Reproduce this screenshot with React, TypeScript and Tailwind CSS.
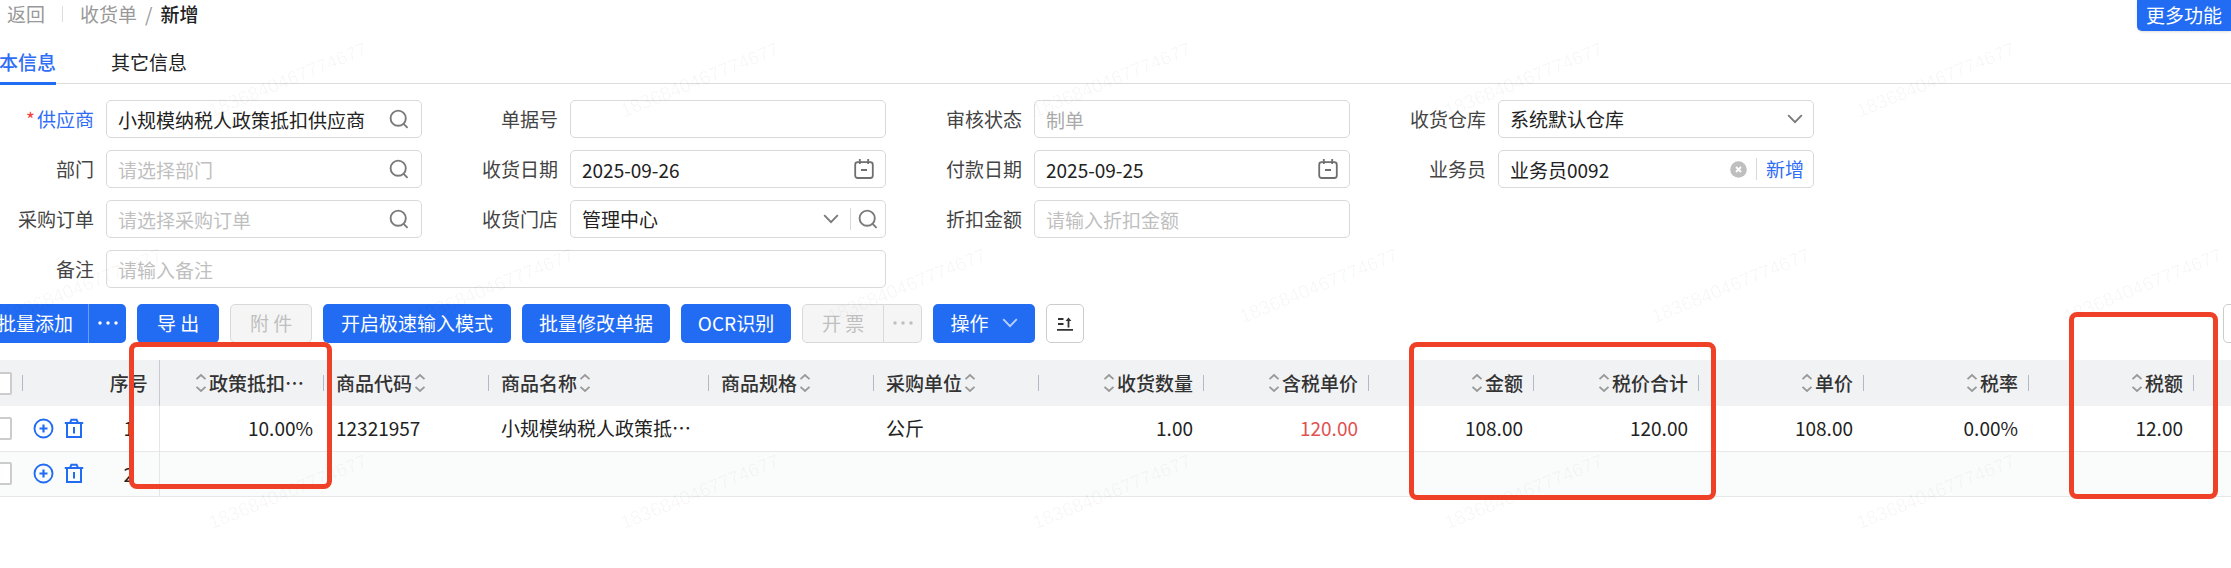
import type { ReactNode } from "react";

const BOX = "flex h-[38px] min-w-0 flex-1 items-center rounded-[5px] border border-[#d9d9d9] bg-white";
const INPUT = "h-full w-full min-w-0 flex-1 appearance-none bg-transparent pl-[11px] outline-none placeholder:text-[#bfbfbf]";
const BLUE = "flex h-[39px] shrink-0 items-center justify-center rounded-[5px] bg-[#226cf3] pb-[2px] whitespace-nowrap text-white";
const GREY = "flex h-[39px] shrink-0 items-center justify-center border border-[#d9d9d9] bg-[#f5f5f5] pb-[2px] whitespace-nowrap text-[#bfbfbf]";

function SearchIcon() {
  return (
    <svg width="20" height="20" viewBox="0 0 20 20" fill="none" stroke="#7a7a7a" strokeWidth="1.9" className="shrink-0">
      <circle cx="9.2" cy="9.2" r="7.6" />
      <path d="M14.6 14.8 18.6 18.8" />
    </svg>
  );
}

function CalendarIcon() {
  return (
    <svg width="20" height="20" viewBox="0 0 20 20" fill="none" stroke="#6f6f6f" strokeWidth="1.8" className="shrink-0">
      <rect x="1.2" y="3.2" width="17.6" height="15.8" rx="2.5" />
      <path d="M5.8 0v5M14.2 0v5M7 11h6" />
    </svg>
  );
}

function Chevron({ color = "#7a7a7a" }: { color?: string }) {
  return (
    <svg width="16" height="10" viewBox="0 0 16 10" fill="none" stroke={color} strokeWidth="1.9" className="shrink-0">
      <path d="M1.2 1.2 8 8.2 14.8 1.2" />
    </svg>
  );
}

function Dots() {
  return (
    <svg width="20" height="4" viewBox="0 0 20 4" fill="currentColor">
      <circle cx="2" cy="2" r="1.7" />
      <circle cx="10" cy="2" r="1.7" />
      <circle cx="18" cy="2" r="1.7" />
    </svg>
  );
}

function SortIcon() {
  return (
    <svg width="12" height="20" viewBox="0 0 12 20" fill="none" stroke="#999" strokeWidth="1.8" className="shrink-0">
      <path d="M1.5 6.2 6 2l4.5 4.2M1.5 13.8 6 18l4.5-4.2" />
    </svg>
  );
}

function Field({ id, label, required, wide, children }: {
  id: string; label: string; required?: boolean; wide?: boolean; children: ReactNode;
}) {
  return (
    <div className={wide ? "col-span-2 flex items-center gap-3 pr-[42px]" : "flex items-center gap-3 pr-[42px]"}>
      <label htmlFor={id} className={required ? "w-[94px] shrink-0 text-right whitespace-nowrap text-[#2f6df6]" : "w-[94px] shrink-0 text-right text-[#444]"}>
        {required && <span className="mr-[2px] text-[#f5403a]">*</span>}{label}
      </label>
      <div className={BOX}>{children}</div>
    </div>
  );
}

function SearchField({ id, label, value, placeholder, required }: {
  id: string; label: string; value?: string; placeholder?: string; required?: boolean;
}) {
  return (
    <Field id={id} label={label} required={required}>
      <input id={id} defaultValue={value} placeholder={placeholder} className={INPUT} />
      <button type="button" aria-label={`搜索${label}`} className="mr-3"><SearchIcon /></button>
    </Field>
  );
}

function DateField({ id, label, value }: { id: string; label: string; value: string }) {
  return (
    <Field id={id} label={label}>
      <input id={id} defaultValue={value} className={INPUT} />
      <button type="button" aria-label={`选择${label}`} className="mr-[11px]"><CalendarIcon /></button>
    </Field>
  );
}

type Column = { key: string; title: string; width: string; right?: boolean; red?: boolean; cut?: boolean };

const COLUMNS: Column[] = [
  { key: "deduct", title: "政策抵扣…", width: "w-[165px]", right: true, cut: true },
  { key: "code", title: "商品代码", width: "w-[165px]" },
  { key: "name", title: "商品名称", width: "w-[220px]" },
  { key: "spec", title: "商品规格", width: "w-[165px]" },
  { key: "unit", title: "采购单位", width: "w-[165px]" },
  { key: "qty", title: "收货数量", width: "w-[165px]", right: true },
  { key: "taxPrice", title: "含税单价", width: "w-[165px]", right: true, red: true },
  { key: "amount", title: "金额", width: "w-[165px]", right: true },
  { key: "total", title: "税价合计", width: "w-[165px]", right: true },
  { key: "price", title: "单价", width: "w-[165px]", right: true },
  { key: "rate", title: "税率", width: "w-[165px]", right: true },
  { key: "tax", title: "税额", width: "w-[165px]", right: true },
];

const ROWS: Record<string, string>[] = [
  {
    deduct: "10.00%", code: "12321957", name: "小规模纳税人政策抵…", unit: "公斤", qty: "1.00",
    taxPrice: "120.00", amount: "108.00", total: "120.00", price: "108.00", rate: "0.00%", tax: "12.00",
  },
  {},
];

function Check({ label }: { label: string }) {
  return (
    <input type="checkbox" aria-label={label}
      className="-ml-[11px] block size-[23px] appearance-none rounded-[2px] border-2 border-[#ccc] bg-white" />
  );
}

function RowActions() {
  return (
    <div className="flex items-center gap-[10px] pl-[10px]">
      <button type="button" aria-label="添加行">
        <svg width="21" height="21" viewBox="0 0 21 21" fill="none" stroke="#226cf3" strokeWidth="1.9">
          <circle cx="10.5" cy="10.5" r="9" />
          <path d="M10.5 6.5v8M6.5 10.5h8" strokeWidth="2.2" />
        </svg>
      </button>
      <button type="button" aria-label="删除行">
        <svg width="20" height="21" viewBox="0 0 20 21" fill="none" stroke="#226cf3" strokeWidth="2">
          <path d="M.8 5h18.4M6.2 4.4 7.4 1.8h5.2l1.2 2.6M3 5v14h14V5M10 9v6.5" />
        </svg>
      </button>
    </div>
  );
}

function ItemTable() {
  return (
    <table className="w-full table-fixed border-collapse">
      <colgroup>
        <col className="w-[23px]" />
        <col className="w-[76px]" />
        <col className="w-[60px]" />
        {COLUMNS.map((c) => <col key={c.key} className={c.width} />)}
        <col />
      </colgroup>
      <thead>
        <tr className="h-[46px] bg-[#f1f2f4] text-[#333]">
          <th className="p-0">
            <div className="flex items-center justify-between">
              <Check label="全选" />
              <span className="h-4 w-px bg-[#b4b8c5]" />
            </div>
          </th>
          <th className="p-0" />
          <th className="border-r border-[#c8cad2] p-0 text-center font-medium">序号</th>
          {COLUMNS.map((c) => (
            <th key={c.key} className="p-0 font-medium">
              <div className="flex items-center whitespace-nowrap">
                {c.right ? (
                  <div className={c.cut ? "flex flex-1 items-center justify-end gap-[2px] pr-[19px]" : "flex flex-1 items-center justify-end gap-[2px] pr-[10px]"}>
                    <SortIcon />{c.title}
                  </div>
                ) : (
                  <div className="flex flex-1 items-center gap-[2px] pl-3">{c.title}<SortIcon /></div>
                )}
                <span className="h-4 w-px bg-[#b4b8c5]" />
              </div>
            </th>
          ))}
          <th className="p-0" />
        </tr>
      </thead>
      <tbody>
        {ROWS.map((row, i) => (
          <tr key={i} className="h-[45px] border-b border-[#e6e9e8] text-[#222] even:bg-[#fafcfb]">
            <td className="p-0"><Check label={`选择第${i + 1}行`} /></td>
            <td className="p-0"><RowActions /></td>
            <td className="border-r border-[#e6e6e6] p-0 text-center">{i + 1}</td>
            {COLUMNS.map((c) => (
              <td key={c.key} className={c.right ? "truncate py-0 pr-[11px] text-right" : "truncate py-0 pl-3"}>
                <span className={c.red ? "text-[#e05252]" : ""}>{row[c.key]}</span>
              </td>
            ))}
            <td className="p-0" />
          </tr>
        ))}
      </tbody>
    </table>
  );
}

// staggered grid: every other line starts half a tile to the left
const MARKS = [0, 1, 2].flatMap((r) =>
  [0, 1, 2, 3, 4, 5].map((c) => ({ left: c * 412 + (r % 2 ? 9 : 214), top: r * 206 + 99 }))
);

function Watermark() {
  return (
    <div aria-hidden="true" className="pointer-events-none absolute inset-0 overflow-hidden select-none">
      {MARKS.map((m) => (
        <div key={`${m.left}-${m.top}`} className="absolute" style={{ left: m.left, top: m.top }}>
          <div className="absolute top-0 left-0 origin-bottom-left -rotate-22 font-['Liberation_Sans',sans-serif] text-[19px] leading-6 whitespace-nowrap text-black/4">
            1836840467774677
          </div>
          <div className="absolute -top-[60px] -left-[20px] origin-bottom-left -rotate-22 text-[46px] leading-[50px] whitespace-nowrap text-black/1">
            胡希凯-9428
          </div>
        </div>
      ))}
    </div>
  );
}

export default function App() {
  return (
    <div className="relative min-h-screen overflow-hidden bg-white font-['Noto_Sans_CJK_SC',sans-serif] text-[19px] leading-7 text-[#222]">
      <header className="flex h-[31px] items-start justify-between">
        <nav className="flex items-center pl-[7px] text-[#999]">
          <a href="#back">返回</a>
          <span className="mx-[17px] h-4 w-px bg-[#ddd]" />
          <a href="#receipts">收货单</a>
          <span className="mx-2">/</span>
          <span className="font-medium text-[#222]">新增</span>
        </nav>
        <button type="button" className="h-[31px] rounded-bl-[5px] bg-[#226cf3] px-[9px] pb-[2px] text-white shadow-sm">更多功能</button>
      </header>

      <div role="tablist" className="-ml-5 flex h-[53px] gap-[55px] border-b border-[#dcdcdc] pt-[17px]">
        <button type="button" role="tab" aria-selected="true" className="-mb-[2px] flex items-start border-b-3 border-[#226cf3] font-medium text-[#2f6df6]">基本信息</button>
        <button type="button" role="tab" aria-selected="false" className="flex items-start">其它信息</button>
      </div>

      <form className="grid grid-cols-[repeat(4,minmax(0,464px))] gap-y-3 pt-4">
        <SearchField id="supplier" label="供应商" value="小规模纳税人政策抵扣供应商" required />
        <Field id="billNo" label="单据号"><input id="billNo" className={INPUT} /></Field>
        <Field id="status" label="审核状态">
          <input id="status" defaultValue="制单" disabled className={`${INPUT} text-[#aaa]`} />
        </Field>
        <Field id="warehouse" label="收货仓库">
          <select id="warehouse" className={INPUT}><option>系统默认仓库</option></select>
          <span className="mr-[10px]"><Chevron /></span>
        </Field>

        <SearchField id="dept" label="部门" placeholder="请选择部门" />
        <DateField id="receiveDate" label="收货日期" value="2025-09-26" />
        <DateField id="payDate" label="付款日期" value="2025-09-25" />
        <Field id="clerk" label="业务员">
          <input id="clerk" defaultValue="业务员0092" className={INPUT} />
          <button type="button" aria-label="清除" className="mr-[9px]">
            <svg width="17" height="17" viewBox="0 0 17 17">
              <circle cx="8.5" cy="8.5" r="8.3" fill="#bfbfbf" />
              <path d="M6 6l5 5M11 6l-5 5" stroke="#fff" strokeWidth="1.8" />
            </svg>
          </button>
          <span className="h-[22px] w-px bg-[#d9d9d9]" />
          <button type="button" className="mx-[9px] shrink-0 text-[#2f6df6]">新增</button>
        </Field>

        <SearchField id="order" label="采购订单" placeholder="请选择采购订单" />
        <Field id="store" label="收货门店">
          <select id="store" className={INPUT}><option>管理中心</option></select>
          <span className="mr-[11px]"><Chevron /></span>
          <span className="h-[22px] w-px bg-[#d9d9d9]" />
          <button type="button" aria-label="搜索收货门店" className="mx-[7px]"><SearchIcon /></button>
        </Field>
        <Field id="discount" label="折扣金额"><input id="discount" placeholder="请输入折扣金额" className={INPUT} /></Field>
        <div />

        <Field id="remark" label="备注" wide><input id="remark" placeholder="请输入备注" className={INPUT} /></Field>
      </form>

      <div className="-ml-[18px] flex gap-[11px] pt-4 pb-[17px]">
        <div className="flex">
          <button type="button" className={`${BLUE} rounded-r-none px-[15px]`}>批量添加</button>
          <button type="button" aria-label="更多添加" className={`${BLUE} w-[38px] rounded-l-none border-l border-[#6d9df8]`}><Dots /></button>
        </div>
        <button type="button" className={`${BLUE} w-[82px]`}>导 出</button>
        <button type="button" disabled className={`${GREY} w-[82px] rounded-[5px]`}>附 件</button>
        <button type="button" className={`${BLUE} w-[188px]`}>开启极速输入模式</button>
        <button type="button" className={`${BLUE} w-[148px]`}>批量修改单据</button>
        <button type="button" className={`${BLUE} w-[110px]`}>OCR识别</button>
        <div className="flex">
          <button type="button" disabled className={`${GREY} w-[82px] rounded-l-[5px]`}>开 票</button>
          <button type="button" disabled aria-label="更多开票" className={`${GREY} w-[38px] rounded-r-[5px] border-l-0`}><Dots /></button>
        </div>
        <button type="button" className={`${BLUE} w-[102px] gap-[13px]`}>操作<Chevron color="#b9d0fc" /></button>
        <button type="button" aria-label="排序" className="flex h-[39px] w-[38px] items-center justify-center rounded-[5px] border border-[#ccc] bg-white">
          <svg width="16" height="14" viewBox="0 0 16 14" fill="none" stroke="#333" strokeWidth="1.8">
            <path d="M1 2h5.5M1 7h5.5M0 12.8h16M11.5 10.5V2" />
            <path d="M8.6 4 11.5.4 14.4 4z" fill="#333" stroke="none" />
          </svg>
        </button>
        <button type="button" aria-label="设置" className="-mr-[30px] ml-auto h-[39px] w-[38px] rounded-[5px] border border-[#ccc] bg-white" />
      </div>

      <ItemTable />

      <Watermark />

      {/* marked areas */}
      <div className="pointer-events-none absolute top-[342px] left-[129px] h-[147px] w-[203px] rounded-lg border-5 border-[#ee4127]" />
      <div className="pointer-events-none absolute top-[342px] left-[1409px] h-[158px] w-[307px] rounded-lg border-5 border-[#ee4127]" />
      <div className="pointer-events-none absolute top-[312px] left-[2069px] h-[187px] w-[149px] rounded-lg border-5 border-[#ee4127]" />
    </div>
  );
}
